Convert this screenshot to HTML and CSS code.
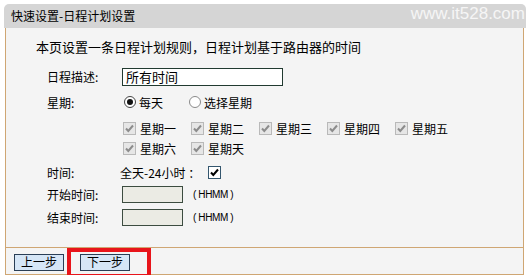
FILE: index.html
```html
<!DOCTYPE html>
<html lang="zh-CN">
<head>
	<meta charset="UTF-8">
	<title>快速设置-日程计划设置</title>
	<link rel="stylesheet" href="styles.css">
</head>
<body>
	<div class="panel">
		<div class="panel-head">
			<span class="title">快速设置-日程计划设置</span>
			<span class="mark">www.it528.com</span>
		</div>
		<div class="panel-body">
			<p class="intro">本页设置一条日程计划规则，日程计划基于路由器的时间</p>
			<div class="form">
				<div class="row row-desc">
					<span class="label">日程描述:</span>
					<span class="text-input">所有时间</span>
				</div>
				<div class="row row-week">
					<span class="label">星期:</span>
					<span class="radio on"></span><span class="opt">每天</span>
					<span class="radio"></span><span class="opt">选择星期</span>
				</div>
				<div class="row row-days">
					<span class="label"></span>
					<div class="days">
						<span class="day"><span class="cb off"><svg viewBox="0 0 11 11"><path d="M2 5.5 L4.3 8 L9 2.5"/></svg></span>星期一</span>
						<span class="day"><span class="cb off"><svg viewBox="0 0 11 11"><path d="M2 5.5 L4.3 8 L9 2.5"/></svg></span>星期二</span>
						<span class="day"><span class="cb off"><svg viewBox="0 0 11 11"><path d="M2 5.5 L4.3 8 L9 2.5"/></svg></span>星期三</span>
						<span class="day"><span class="cb off"><svg viewBox="0 0 11 11"><path d="M2 5.5 L4.3 8 L9 2.5"/></svg></span>星期四</span>
						<span class="day"><span class="cb off"><svg viewBox="0 0 11 11"><path d="M2 5.5 L4.3 8 L9 2.5"/></svg></span>星期五</span>
						<span class="day"><span class="cb off"><svg viewBox="0 0 11 11"><path d="M2 5.5 L4.3 8 L9 2.5"/></svg></span>星期六</span>
						<span class="day"><span class="cb off"><svg viewBox="0 0 11 11"><path d="M2 5.5 L4.3 8 L9 2.5"/></svg></span>星期天</span>
					</div>
				</div>
				<div class="row row-time">
					<span class="label">时间:</span>
					<span class="allday">全天-24小时 ：</span>
					<span class="cb"><svg viewBox="0 0 11 11"><path d="M2 5.5 L4.3 8 L9 2.5"/></svg></span>
				</div>
				<div class="row row-start">
					<span class="label">开始时间:</span>
					<span class="time-input"></span>
					<span class="hint">( HHMM )</span>
				</div>
				<div class="row row-end">
					<span class="label">结束时间:</span>
					<span class="time-input"></span>
					<span class="hint">( HHMM )</span>
				</div>
			</div>
		</div>
		<div class="panel-foot">
			<button class="btn">上一步</button>
			<span class="next-wrap">
				<button class="btn">下一步</button>
				<span class="highlight"></span>
			</span>
		</div>
	</div>
</body>
</html>
```
FILE: styles.css
```css
body {
	margin: 0;
	background-color: #fff;
	font-family: "Noto Sans CJK SC", "Liberation Sans", sans-serif;
	color: #000;
}

.panel {
	margin: 4px 0 0 5px;
	width: 519px;
}

.panel-head {
	height: 24px;
	background-color: #d5d5d5;
	border-radius: 5px 5px 0 0;
	display: flex;
	align-items: center;
	justify-content: space-between;
	padding: 0 0 0 7px;
	margin-left: -1px;
	margin-right: -2px;
}

.title {
	font-size: 12px;
	line-height: 24px;
}

.mark {
	font-family: "Liberation Sans", Arial, sans-serif;
	font-size: 17px;
	color: #f6f6f6;
	line-height: 24px;
	margin-top: -4px;
	padding-right: 1px;
}

.panel-body {
	background-color: #f4f4f4;
	border-left: 1px solid #cfa673;
	border-right: 1px solid #cfa673;
	height: 219px;
	box-sizing: border-box;
	padding: 10px 0 0 30px;
}

.intro {
	margin: 0;
	font-size: 13px;
	line-height: 18px;
}

.form {
	padding-left: 11px;
	font-size: 12px;
}

.row {
	display: flex;
	align-items: center;
}

.label {
	width: 73px;
	flex: none;
}

.row-desc {
	height: 21px;
	margin-top: 10px;
}

.row-week {
	height: 20px;
	margin-top: 5px;
}

.row-days {
	margin-top: 6px;
	align-items: flex-start;
}

.row-time {
	height: 20px;
	margin-top: 4px;
}

.row-start {
	height: 20px;
	margin-top: 2px;
}

.row-end {
	height: 20px;
	margin-top: 3px;
}

.text-input {
	margin-left: 2px;
	width: 161px;
	height: 18px;
	box-sizing: border-box;
	border: 1px solid #213a30;
	background-color: #fff;
	font-size: 13px;
	line-height: 16px;
	padding-left: 3px;
}

.radio {
	width: 12px;
	height: 12px;
	box-sizing: border-box;
	border: 1px solid #8a8a8a;
	border-radius: 50%;
	background-color: #fff;
	margin: 0 3px 0 4px;
	position: relative;
}

.radio.on {
	border-color: #444;
}

.radio.on::after {
	content: "";
	position: absolute;
	left: 2px;
	top: 2px;
	width: 6px;
	height: 6px;
	border-radius: 50%;
	background-color: #111;
}

.opt {
	margin-right: 22px;
}

.days {
	display: flex;
	flex-wrap: wrap;
	width: 340px;
}

.day {
	display: flex;
	align-items: center;
	height: 20px;
	width: 68px;
	padding-left: 3px;
	box-sizing: border-box;
}

.cb {
	width: 13px;
	height: 13px;
	box-sizing: border-box;
	border: 1px solid #34566e;
	background-color: #fff;
	margin-right: 4px;
	display: inline-flex;
	flex: none;
}

.cb svg {
	width: 11px;
	height: 11px;
	fill: none;
	stroke: #000;
	stroke-width: 2;
}

.cb.off {
	border-color: #b9b9b9;
	background-color: #e6e6e6;
}

.cb.off svg {
	stroke: #8c8c8c;
}

.allday {
	margin-right: 8px;
	white-space: pre;
}

.time-input {
	margin-left: 2px;
	width: 61px;
	height: 17px;
	box-sizing: border-box;
	border: 1px solid #3c4c40;
	background-color: #ebebe4;
}

.hint {
	margin-left: 10px;
	font-family: "Liberation Sans", Arial, sans-serif;
	font-size: 10px;
	letter-spacing: -0.4px;
}

.panel-foot {
	background-color: #f4f4f4;
	border: 1px solid #cfa673;
	height: 26px;
	box-sizing: content-box;
	display: flex;
	align-items: center;
	padding-left: 8px;
}

.btn {
	font-family: "Noto Sans CJK SC", sans-serif;
	font-size: 12px;
	line-height: 14px;
	height: 17px;
	width: 50px;
	padding: 0;
	background-color: #d6e6f6;
	border: 1px solid #2a3e55;
	color: #000;
	margin-top: 2px;
}

.next-wrap {
	position: relative;
	margin-left: 16px;
	display: inline-flex;
}

.highlight {
	position: absolute;
	left: -13px;
	top: -4px;
	width: 84px;
	height: 30px;
	box-sizing: border-box;
	border: 4px solid #e8141a;
}
```
